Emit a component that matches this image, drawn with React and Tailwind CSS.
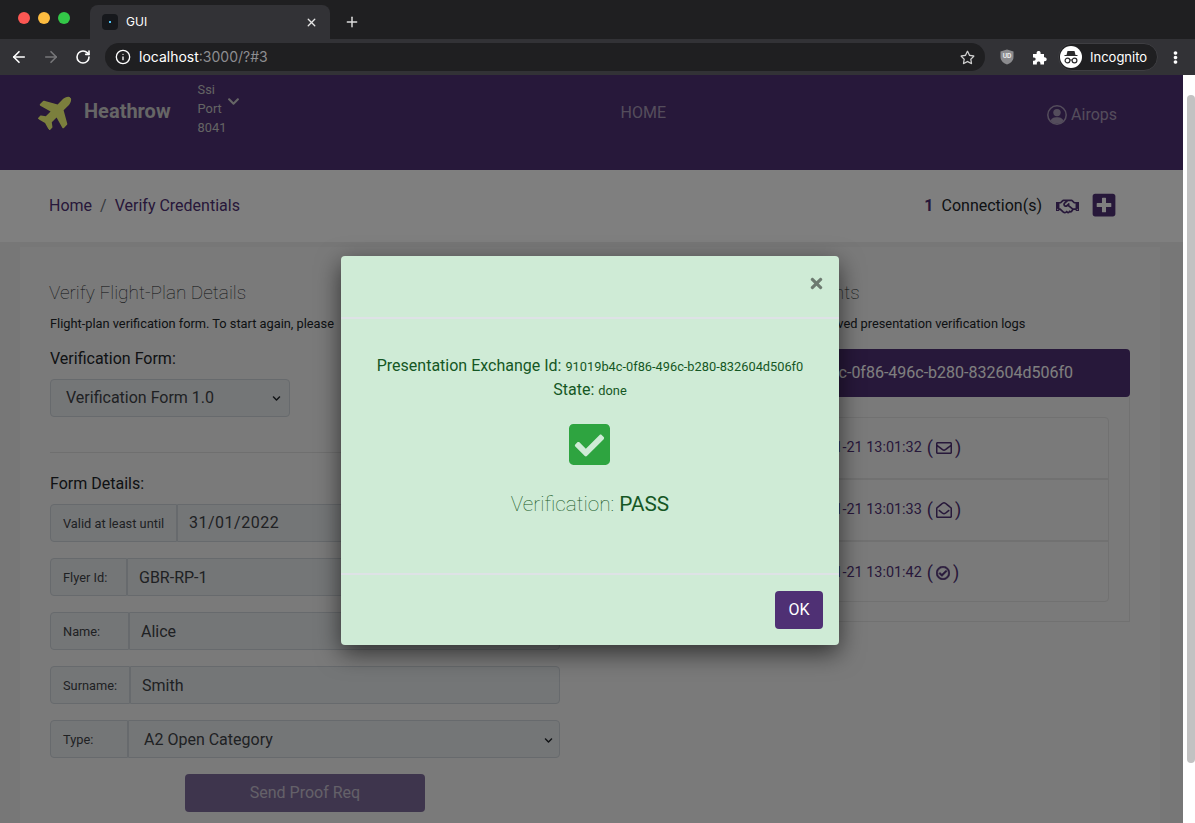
import {
  FaPlane,
  FaChevronDown,
  FaRegHandshake,
  FaPlusSquare,
  FaCheckSquare,
  FaTimes,
  FaRegEnvelope,
  FaRegEnvelopeOpen,
  FaRegCheckCircle,
  FaRegStar,
  FaEllipsisV,
} from "react-icons/fa";
import { ArrowLeft, ArrowRight, RotateCw, Info, Plus, X } from "lucide-react";

const ID = "91019b4c-0f86-496c-b280-832604d506f0";

function Chrome() {
  return (
    <div className="h-[75px] shrink-0 bg-[#323236] font-['Inter',sans-serif]">
      <div className="h-[39px] bg-[#1f1f21] flex items-end relative">
        <div className="flex gap-2 absolute left-[18px] top-3">
          <span className="w-3 h-3 rounded-full bg-[#fc5753]" />
          <span className="w-3 h-3 rounded-full bg-[#fdbc40]" />
          <span className="w-3 h-3 rounded-full bg-[#33c748]" />
        </div>
        <div className="ml-[90px] w-[240px] h-[34px] bg-[#323236] rounded-t-lg flex items-center pl-3 pr-3 text-white text-xs">
          <span className="w-4 h-4 rounded-sm bg-[#16181c] flex items-center justify-center mr-2">
            <span className="w-[2px] h-[2px] bg-[#4fc3f7]" />
          </span>
          <span className="flex-1">GUI</span>
          <X size={13} strokeWidth={2.5} className="text-[#e6e6e6]" />
        </div>
        <Plus size={16} strokeWidth={2.2} className="text-[#dcdcdc] ml-[14px] mb-[9px]" />
      </div>
      <div className="h-9 flex items-center">
        <ArrowLeft size={18} strokeWidth={2.2} className="text-white ml-[10px]" />
        <ArrowRight size={18} strokeWidth={2.2} className="text-[#77777a] ml-[14px]" />
        <RotateCw size={16} strokeWidth={2.4} className="text-white ml-[15px]" />
        <div className="ml-[14px] w-[880px] h-7 rounded-full bg-[#1f1f21] flex items-center pl-[10px] pr-[10px] text-sm">
          <Info size={16} strokeWidth={2} className="text-white" />
          <span className="ml-2 text-white">localhost</span>
          <span className="text-[#8d8d90]">:3000/?#3</span>
          <FaRegStar size={15} className="text-[#d0d0d0] ml-auto" />
        </div>
        <svg width="14" height="16" viewBox="0 0 14 16" className="ml-[15px]">
          <path d="M7 0.5 L13.5 2.5 V8 C13.5 12 10 14.5 7 15.5 C4 14.5 0.5 12 0.5 8 V2.5 Z" fill="#8b8b8e" />
          <text x="7" y="9" textAnchor="middle" fontSize="6" fontWeight="700" fill="#f0f0f0">UD</text>
        </svg>
        <svg width="15" height="15" viewBox="0 0 15 15" className="ml-[18px]">
          <path
            d="M1 4 H4.6 V3 C4.6 0.4 8.6 0.4 8.6 3 V4 H12 V7.2 H12.6 C15.4 7.2 15.4 11.2 12.6 11.2 H12 V14.5 H8.4 V13.4 C8.4 11 4.8 11 4.8 13.4 V14.5 H1 V10.8 H2 C4.2 10.8 4.2 7.4 2 7.4 H1 Z"
            fill="#ffffff"
          />
        </svg>
        <div className="ml-[11px] w-[100px] h-7 rounded-full border border-[#3e3e42] bg-[#1f1f21] flex items-center pl-[1px]">
          <span className="w-[22px] h-[22px] rounded-full bg-white flex items-center justify-center">
            <svg width="16" height="14" viewBox="0 0 16 14" fill="none">
              <path d="M4.5 1 H11.5 L12.5 5 H14.5 V6 H1.5 V5 H3.5 Z" fill="#2a2a2c" />
              <circle cx="4.5" cy="10.5" r="2.4" stroke="#2a2a2c" strokeWidth="1.2" />
              <circle cx="11.5" cy="10.5" r="2.4" stroke="#2a2a2c" strokeWidth="1.2" />
              <path d="M7 10 H9" stroke="#2a2a2c" strokeWidth="1.2" />
            </svg>
          </span>
          <span className="ml-2 mt-[2px] text-white text-[13px]">Incognito</span>
        </div>
        <FaEllipsisV size={13} className="text-white ml-[11px]" />
      </div>
    </div>
  );
}

function TopNav() {
  return (
    <div className="h-[95px] shrink-0 bg-[#4f3074] flex items-start text-[#cfcfcf]">
      <FaPlane size={38} className="text-[#f6ff7a] ml-[38px] mt-[17px] -rotate-45" />
      <span className="ml-[8px] mt-[22px] text-xl font-bold text-[#cccccc] leading-7">
        Heathrow
      </span>
      <div className="ml-[27px] mt-[5px] w-[28px] text-[12.8px] leading-[19px] text-[#c8c8c8]">
        <div>Ssi</div>
        <div>Port</div>
        <div>8041</div>
      </div>
      <FaChevronDown size={13} className="ml-[1px] mt-[20px] text-[#cccccc]" />
      <span className="ml-[381px] mt-7 text-base leading-5 text-[#a99bb8]">HOME</span>
      <div className="ml-[381px] mt-[27px] flex items-center text-base text-[#a99bb8]">
        <svg width="20" height="20" viewBox="0 0 20 20" fill="none">
          <circle cx="10" cy="10" r="9.2" stroke="currentColor" strokeWidth="1.5" />
          <circle cx="10" cy="7.6" r="3.7" fill="currentColor" />
          <path d="M3.6 15.8 C4.6 12.8 7 12.2 10 12.2 C13 12.2 15.4 12.8 16.4 15.8 C14.6 17.8 12.4 18.6 10 18.6 C7.6 18.6 5.4 17.8 3.6 15.8 Z" fill="currentColor" />
        </svg>
        <span className="ml-1 mt-px">Airops</span>
      </div>
    </div>
  );
}

function Breadcrumb() {
  return (
    <div className="h-[72px] shrink-0 bg-white flex items-center pl-[49px] pr-[66px] text-base">
      <span className="text-[#4f3074]">Home</span>
      <span className="mx-2 text-[#6c757d]">/</span>
      <span className="text-[#4f3074]">Verify Credentials</span>
      <span className="ml-auto font-bold text-[#4f3074]">1</span>
      <span className="ml-2 text-[#212529]">Connection(s)</span>
      <FaRegHandshake size={23} className="ml-[14px] text-[#4f3074]" />
      <FaPlusSquare size={26} className="ml-[12px] -mt-[2px] text-[#4f3074]" />
    </div>
  );
}

function Field({ label, labelWidth, value, select, wide }) {
  return (
    <div className="flex h-[38px] mb-4 w-[510px] text-[#3f4347]">
      <div
        className="shrink-0 bg-[#e9ecef] border border-[#ced4da] rounded-l flex items-center pl-3 pt-[2px] text-[12.8px]"
        style={{ width: labelWidth }}
      >
        {label}
      </div>
      <div
        className={
          "flex-1 bg-[#e9ecef] border border-[#ced4da] rounded-r flex items-center pl-[11px] pr-1 text-base " +
          (wide ? "" : "pt-[2px]")
        }
      >
        <span className={(select ? "pl-1 " : "") + (wide ? "tracking-[0.5px]" : "")}>{value}</span>
        {select && <FaChevronDown size={9} className="ml-auto mr-[2px] text-[#212529]" />}
      </div>
    </div>
  );
}

function FormColumn() {
  return (
    <div className="w-[510px] shrink-0 text-[#212529]">
      <h2 className="mt-px text-[19px] font-thin leading-6 -ml-px">Verify Flight-Plan Details</h2>
      <p className="mt-[9px] text-[12.8px] leading-5">
        Flight-plan verification form. To start again, please
      </p>
      <div className="mt-[13px] text-base leading-6">Verification Form:</div>
      <div className="mt-2 w-[240px] h-[38px] bg-[#e9ecef] border border-[#ced4da] rounded flex items-center pl-[15px] pr-2 text-base text-[#3f4347]">
        Verification Form 1.0
        <FaChevronDown size={9} className="ml-auto text-[#212529]" />
      </div>
      <div className="mt-[35px] h-px bg-[#dedede]" />
      <div className="mt-[19px] text-base leading-6">Form Details:</div>
      <div className="mt-2">
        <Field label="Valid at least until" labelWidth={127} value="31/01/2022" wide />
        <Field label="Flyer Id:" labelWidth={77} value="GBR-RP-1" />
        <Field label="Name:" labelWidth={79} value="Alice" />
        <Field label="Surname:" labelWidth={80} value="Smith" />
        <Field label="Type:" labelWidth={78} value="A2 Open Category" select />
      </div>
      <button className="block mx-auto w-[240px] h-[38px] rounded bg-[#7d6b9a] text-base text-[#c9c2d2]">
        Send Proof Req
      </button>
    </div>
  );
}

function LogRow({ time, icon, last }) {
  return (
    <div
      className={
        "h-[62px] flex items-center pl-[178px] text-[14.4px] text-[#4f3074] " +
        (last ? "" : "border-b-2 border-[#e2e2e2]")
      }
    >
      <span>{time}</span>
      <span className="ml-[5px] text-lg flex items-center gap-[3px]">
        ( {icon} )
      </span>
    </div>
  );
}

function LogColumn() {
  return (
    <div className="ml-[30px] flex-1 text-[#212529]">
      <h2 className="mt-px text-[19px] font-thin leading-6 pl-[22px]">Presentation Exchange Events</h2>
      <p className="mt-[9px] text-[12.8px] leading-5 pl-[216px]">
        Received presentation verification logs
      </p>
      <div className="mt-[15px] h-12 rounded bg-[#4f3074] text-white text-base flex items-center justify-end pr-[57px]">
        {ID}
      </div>
      <div className="h-[225px] border border-t-0 border-[#e2e2e2] pt-5 pl-5 pr-5">
        <div className="border border-[#e2e2e2] rounded h-[185px]">
          <LogRow time="2022-01-21 13:01:32" icon={<FaRegEnvelope size={16} />} />
          <LogRow time="2022-01-21 13:01:33" icon={<FaRegEnvelopeOpen size={16} />} />
          <LogRow
            time="2022-01-21 13:01:42"
            icon={<FaRegCheckCircle size={14} stroke="currentColor" strokeWidth={24} />}
            last
          />
        </div>
      </div>
    </div>
  );
}

function Modal() {
  return (
    <div className="absolute inset-0 bg-black/50 pl-[341px] pt-[181px]">
      <div className="w-[498px] h-[389px] bg-[#cfebd6] rounded shadow-[0_8px_24px_rgba(0,0,0,0.6)] flex flex-col text-[#155724]">
        <div className="h-[63px] shrink-0 border-b-2 border-[#dee2e6] flex justify-end pr-[14px] pt-[19px]">
          <FaTimes size={17} className="text-[#6d7a70]" />
        </div>
        <div className="flex-1 flex flex-col items-center pt-[35px]">
          <div className="text-base leading-6">
            Presentation Exchange Id: <span className="text-[12.8px]">{ID}</span>
          </div>
          <div className="-mt-px text-base leading-6">
            State: <span className="text-[12.8px]">done</span>
          </div>
          <div className="mt-[21px] w-[41px] h-[41px] -ml-px flex items-center justify-center">
            <FaCheckSquare size={47} className="text-[#2ea440]" />
          </div>
          <div className="mt-[25px] text-[20.8px] leading-7">
            <span className="font-thin">Verification: </span>
            <span className="font-normal">PASS</span>
          </div>
        </div>
        <div className="h-[72px] shrink-0 border-t-2 border-[#dee2e6] flex items-start justify-end pr-4 pt-4">
          <button className="w-12 h-[38px] rounded bg-[#4f3074] text-white text-base">OK</button>
        </div>
      </div>
    </div>
  );
}

export default function App() {
  return (
    <div className="h-screen overflow-hidden flex flex-col bg-white font-['Roboto',sans-serif]">
      <Chrome />
      <div className="flex-1 flex min-h-0">
        <main className="flex-1 relative overflow-hidden flex flex-col">
          <TopNav />
          <Breadcrumb />
          <div className="flex-1 bg-[#eeeeee] pt-[5px] pl-5 pr-[23px] flex min-h-0">
            <div className="flex-1 bg-[#f4f4f4] flex pl-[30px] pr-[30px] pt-[33px]">
              <FormColumn />
              <LogColumn />
            </div>
          </div>
          <Modal />
        </main>
        <div className="w-3 shrink-0 bg-white pt-5 pl-1">
          <div className="w-2 h-[668px] rounded-full bg-[#c2c2c2]" />
        </div>
      </div>
    </div>
  );
}
